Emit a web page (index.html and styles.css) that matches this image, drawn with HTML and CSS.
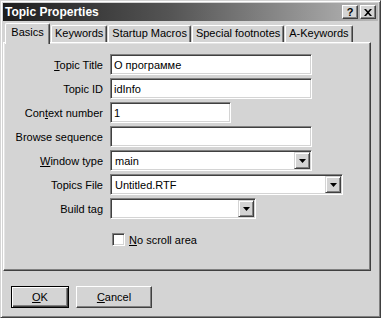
FILE: index.html
```html
<!DOCTYPE html>
<html lang="en">
<head>
  <meta charset="UTF-8">
  <title>Topic Properties</title>
  <link rel="stylesheet" href="styles.css">
</head>
<body>
  <div class="dialog">
    <div class="titlebar">
      <span class="title">Topic Properties</span>
      <span class="caption-btn help">?</span>
      <span class="caption-btn close">
        <svg width="8" height="7" viewBox="0 0 8 7"><path d="M0 0h2l2 2.2L6 0h2L5 3.5 8 7H6L4 4.8 2 7H0l3-3.5z" fill="#000"/></svg>
      </span>
    </div>

    <div class="tabs">
      <div class="tab selected">Basics</div>
      <div class="tab">Keywords</div>
      <div class="tab">Startup Macros</div>
      <div class="tab">Special footnotes</div>
      <div class="tab">A-Keywords</div>
    </div>

    <div class="panel">
      <div class="form-grid">
        <label><u>T</u>opic Title</label>
        <input type="text" class="field w-full" value="О программе">

        <label>Topic ID</label>
        <input type="text" class="field w-full" value="idInfo">

        <label>Con<u>t</u>ext number</label>
        <input type="text" class="field w-short" value="1">

        <label>Browse sequence</label>
        <input type="text" class="field w-full" value="">

        <label><u>W</u>indow type</label>
        <div class="combo w-full">
          <span class="combo-value">main</span>
          <span class="drop"><svg width="7" height="4" viewBox="0 0 7 4"><path d="M0 0h7L3.5 4z" fill="#000"/></svg></span>
        </div>

        <label>Topics File</label>
        <div class="combo w-wide">
          <span class="combo-value">Untitled.RTF</span>
          <span class="drop"><svg width="7" height="4" viewBox="0 0 7 4"><path d="M0 0h7L3.5 4z" fill="#000"/></svg></span>
        </div>

        <label>Build tag</label>
        <div class="combo w-tag">
          <span class="combo-value"></span>
          <span class="drop"><svg width="7" height="4" viewBox="0 0 7 4"><path d="M0 0h7L3.5 4z" fill="#000"/></svg></span>
        </div>

        <div class="check-row">
          <span class="checkbox"></span>
          <span><u>N</u>o scroll area</span>
        </div>
      </div>
    </div>

    <div class="footer">
      <button class="btn default"><u>O</u>K</button>
      <button class="btn cancel"><u>C</u>ancel</button>
    </div>
  </div>
</body>
</html>
```

FILE: styles.css
```css
:root {
  --face: #d4d4d4;
  --light: #ffffff;
  --shadow: #808080;
  --dark: #404040;
}

* {
  box-sizing: border-box;
  margin: 0;
  padding: 0;
}

body {
  font-family: 'Liberation Sans', Arial, sans-serif;
  font-size: 11px;
  color: #000;
  background: var(--face);
}

.dialog {
  width: 381px;
  height: 318px;
  padding: 2px;
  background: var(--face);
  border: 1px solid;
  border-color: var(--face) var(--dark) var(--dark) var(--face);
  box-shadow: inset 1px 1px var(--light), inset -1px -1px var(--shadow);
  display: flex;
  flex-direction: column;
}

/* title bar */
.titlebar {
  height: 18px;
  display: flex;
  align-items: center;
  padding: 0 2px;
  background: linear-gradient(to right, #1e1e1e 0%, #555 45%, #b8b8b8 100%);
}

.title {
  flex: 1;
  color: #fff;
  font-weight: bold;
  font-size: 12px;
}

.caption-btn {
  width: 16px;
  height: 14px;
  display: flex;
  align-items: center;
  justify-content: center;
  background: var(--face);
  border: 1px solid;
  border-color: var(--light) var(--dark) var(--dark) var(--light);
  box-shadow: inset -1px -1px var(--shadow);
  font-weight: bold;
  font-size: 11px;
  line-height: 1;
}

.help {
  margin-right: 2px;
}

/* tabs */
.tabs {
  display: flex;
  align-items: flex-start;
  gap: 1px;
  padding-left: 2px;
  margin-top: 2px;
  height: 19px;
  position: relative;
  z-index: 1;
}

.tab {
  height: 17px;
  margin-top: 2px;
  padding: 0 3px;
  line-height: 15px;
  background: var(--face);
  border: 1px solid;
  border-bottom: none;
  border-color: var(--light) var(--dark) var(--dark) var(--light);
  border-radius: 2px 2px 0 0;
  box-shadow: inset -1px 0 var(--shadow);
  white-space: nowrap;
}

.tab.selected {
  margin-top: 0;
  height: 21px;
  width: 45px;
  text-align: center;
  line-height: 16px;
}

/* panel */
.panel {
  height: 229px;
  margin-right: 7px;
  padding-top: 11px;
  border: 1px solid;
  border-color: var(--light) var(--dark) var(--dark) var(--light);
  box-shadow: inset -1px -1px var(--shadow), inset 1px 1px #e4e4e4;
}

.form-grid {
  display: grid;
  grid-template-columns: 99px 1fr;
  grid-auto-rows: 21px;
  column-gap: 7px;
  row-gap: 3px;
  align-items: center;
}

.form-grid label {
  text-align: right;
  white-space: nowrap;
}

.field,
.combo {
  height: 21px;
  background: #fff;
  border: 1px solid;
  border-color: var(--shadow) var(--light) var(--light) var(--shadow);
  box-shadow: inset 1px 1px var(--dark), inset -1px -1px var(--face);
  font-family: inherit;
  font-size: 11px;
  color: #000;
}

.field {
  padding: 1px 3px 0;
  outline: none;
}

.w-full { width: 202px; }
.w-short { width: 121px; }
.w-wide { width: 233px; }
.w-tag { width: 146px; }

.combo {
  display: flex;
  align-items: center;
  padding: 1px;
}

.combo-value {
  flex: 1;
  padding-left: 3px;
}

.drop {
  width: 16px;
  height: 17px;
  display: flex;
  align-items: center;
  justify-content: center;
  background: var(--face);
  border: 1px solid;
  border-color: var(--face) var(--dark) var(--dark) var(--face);
  box-shadow: inset 1px 1px var(--light), inset -1px -1px var(--shadow);
}

.check-row {
  grid-column: 2;
  margin-top: 14px;
  padding-left: 2px;
  display: flex;
  align-items: center;
  gap: 4px;
}

.checkbox {
  width: 13px;
  height: 13px;
  background: #fff;
  border: 1px solid;
  border-color: var(--shadow) var(--light) var(--light) var(--shadow);
  box-shadow: inset 1px 1px var(--dark), inset -1px -1px var(--face);
}

/* buttons */
.footer {
  display: flex;
  gap: 7px;
  padding-left: 8px;
  margin-top: 15px;
}

.btn {
  height: 22px;
  background: var(--face);
  font-family: inherit;
  font-size: 11px;
  color: #000;
  border: 1px solid;
  border-color: var(--light) var(--dark) var(--dark) var(--light);
  box-shadow: inset -1px -1px var(--shadow);
}

.btn.default {
  width: 58px;
  border-color: #000;
  box-shadow: inset 1px 1px var(--light), inset -1px -1px var(--dark), inset -2px -2px var(--shadow);
}

.btn.cancel {
  width: 76px;
}
```
